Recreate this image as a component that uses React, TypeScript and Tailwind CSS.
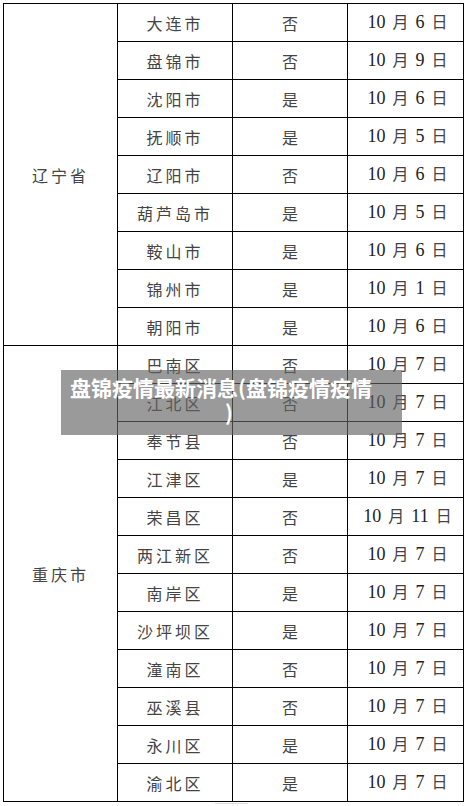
const liaoning: [string, string, string][] = [
  ["大连市", "否", "6"],
  ["盘锦市", "否", "9"],
  ["沈阳市", "是", "6"],
  ["抚顺市", "是", "5"],
  ["辽阳市", "否", "6"],
  ["葫芦岛市", "是", "5"],
  ["鞍山市", "是", "6"],
  ["锦州市", "是", "1"],
  ["朝阳市", "是", "6"],
];

const chongqing: [string, string, string][] = [
  ["巴南区", "否", "7"],
  ["江北区", "否", "7"],
  ["奉节县", "否", "7"],
  ["江津区", "是", "7"],
  ["荣昌区", "否", "11"],
  ["两江新区", "否", "7"],
  ["南岸区", "是", "7"],
  ["沙坪坝区", "是", "7"],
  ["潼南区", "否", "7"],
  ["巫溪县", "否", "7"],
  ["永川区", "是", "7"],
  ["渝北区", "是", "7"],
];

const cjk = "font-['Noto_Sans_CJK_SC',sans-serif]";

function Rows({ province, rows }: { province: string; rows: [string, string, string][] }) {
  return (
    <>
      {rows.map(([city, flag, day], i) => (
        <tr key={city} className="h-[38px]">
          {i === 0 && (
            <td
              rowSpan={rows.length}
              className={`border border-black text-center text-[16px] tracking-[3px] text-[#444] ${cjk}`}
            >
              {province}
            </td>
          )}
          <td className={`border border-black text-center text-[16px] tracking-[3px] text-[#444] ${cjk}`}>
            {city}
          </td>
          <td className={`border border-black text-center text-[16px] text-[#444] ${cjk}`}>{flag}</td>
          <td className="border border-black text-center text-[18px] text-[#222] font-['Liberation_Serif',serif] pl-[4px]">
            10
            <span className={`mx-[7px] text-[16px] text-[#444] ${cjk}`}>月</span>
            {day}
            <span className={`ml-[7px] text-[16px] text-[#444] ${cjk}`}>日</span>
          </td>
        </tr>
      ))}
    </>
  );
}

export default function App() {
  return (
    <div className="relative w-[464px] h-[806px] bg-white overflow-hidden">
      <div className="pl-[3px] pt-[3px]">
        <table className="table-fixed border-collapse w-[460px]">
          <colgroup>
            <col className="w-[114px]" />
            <col className="w-[115px]" />
            <col className="w-[115px]" />
            <col className="w-[116px]" />
          </colgroup>
          <tbody>
            <Rows province="辽宁省" rows={liaoning} />
            <Rows province="重庆市" rows={chongqing} />
          </tbody>
        </table>
        <div className="ml-[212px] mt-[1px] w-[33px] h-[3px] border-t border-[#ddd]" />
      </div>

      <div className="absolute left-[61px] top-[370px] w-[341px] h-[65px] bg-[rgba(100,100,100,0.65)] pt-[5px] text-white font-bold text-[21px] leading-[25px] font-['Noto_Sans_CJK_SC',sans-serif]">
        <div className="pl-[9px] whitespace-nowrap">盘锦疫情最新消息(盘锦疫情疫情</div>
        <div className="pl-[164px]">)</div>
      </div>
    </div>
  );
}
